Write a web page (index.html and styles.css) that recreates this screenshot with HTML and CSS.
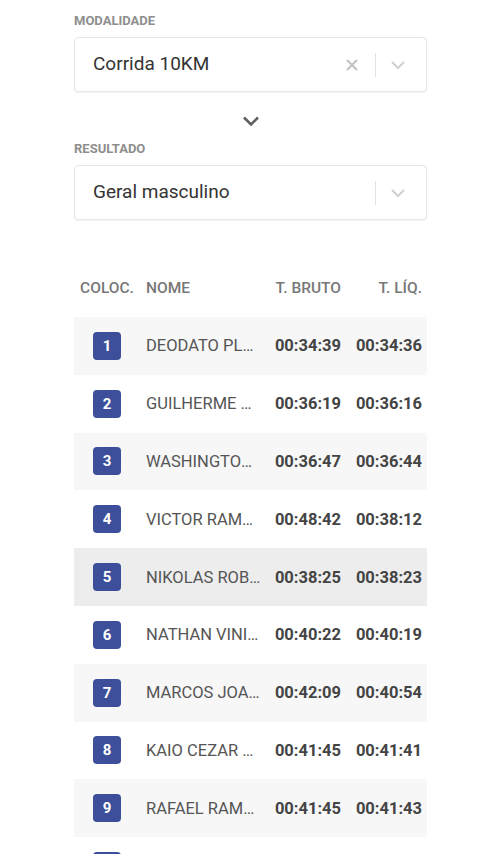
FILE: index.html
```html
<!DOCTYPE html>
<html lang="pt-BR">
<head>
  <meta charset="UTF-8" />
  <meta name="viewport" content="width=device-width, initial-scale=1.0"/>
  <title>Resultados</title>
  <link rel="stylesheet" href="styles.css">
</head>
<body>
  <div class="page">
    <label class="field-label">MODALIDADE</label>
    <div class="select">
      <span class="select-value">Corrida 10KM</span>
      <span class="select-icons">
        <svg class="clear" width="14" height="14" viewBox="0 0 14 14"><path d="M2 2L12 12M12 2L2 12" stroke="#c4c4c4" stroke-width="2.2" fill="none"/></svg>
        <span class="sep"></span>
        <svg class="arrow" width="16" height="10" viewBox="0 0 16 10"><path d="M2 2L8 8L14 2" stroke="#cfcfcf" stroke-width="2" fill="none"/></svg>
      </span>
    </div>

    <div class="mid-arrow">
      <svg width="18" height="12" viewBox="0 0 18 12"><path d="M2 2.5L9 9.5L16 2.5" stroke="#5f5f5f" stroke-width="2.6" fill="none"/></svg>
    </div>

    <label class="field-label">RESULTADO</label>
    <div class="select">
      <span class="select-value">Geral masculino</span>
      <span class="select-icons">
        <span class="sep"></span>
        <svg class="arrow" width="16" height="10" viewBox="0 0 16 10"><path d="M2 2L8 8L14 2" stroke="#cfcfcf" stroke-width="2" fill="none"/></svg>
      </span>
    </div>

    <div class="table-wrap">
      <table class="results">
        <colgroup>
          <col class="c-pos"><col class="c-name"><col class="c-time"><col class="c-time2">
        </colgroup>
        <thead>
          <tr>
            <th class="pos">COLOC.</th>
            <th class="name">NOME</th>
            <th class="time">T. BRUTO</th>
            <th class="time">T. LÍQ.</th>
          </tr>
        </thead>
        <tbody>
          <tr><td class="pos"><span class="badge">1</span></td><td class="name">DEODATO PLÁCIDO</td><td class="time">00:34:39</td><td class="time">00:34:36</td></tr>
          <tr><td class="pos"><span class="badge">2</span></td><td class="name">GUILHERME WANDERLEY</td><td class="time">00:36:19</td><td class="time">00:36:16</td></tr>
          <tr><td class="pos"><span class="badge">3</span></td><td class="name">WASHINGTON LUIZ</td><td class="time">00:36:47</td><td class="time">00:36:44</td></tr>
          <tr><td class="pos"><span class="badge">4</span></td><td class="name">VICTOR RAMOS</td><td class="time">00:48:42</td><td class="time">00:38:12</td></tr>
          <tr class="hover"><td class="pos"><span class="badge">5</span></td><td class="name">NIKOLAS ROBERTO</td><td class="time">00:38:25</td><td class="time">00:38:23</td></tr>
          <tr><td class="pos"><span class="badge">6</span></td><td class="name">NATHAN VINICIUS</td><td class="time">00:40:22</td><td class="time">00:40:19</td></tr>
          <tr><td class="pos"><span class="badge">7</span></td><td class="name">MARCOS JOAQUIM</td><td class="time">00:42:09</td><td class="time">00:40:54</td></tr>
          <tr><td class="pos"><span class="badge">8</span></td><td class="name">KAIO CEZAR SILVA</td><td class="time">00:41:45</td><td class="time">00:41:41</td></tr>
          <tr><td class="pos"><span class="badge">9</span></td><td class="name">RAFAEL RAMOS</td><td class="time">00:41:45</td><td class="time">00:41:43</td></tr>
          <tr><td class="pos"><span class="badge">10</span></td><td class="name">LUCAS FERREIRA</td><td class="time">00:42:01</td><td class="time">00:41:58</td></tr>
        </tbody>
      </table>
    </div>
  </div>
</body>
</html>
```

FILE: styles.css
```css
body {
  margin: 0;
  background: #ffffff;
  font-family: Roboto, "Liberation Sans", sans-serif;
  overflow: hidden;
}

.page {
  width: 353px;
  margin-left: 74px;
  padding-top: 13px;
}

.field-label {
  display: block;
  font-size: 13px;
  font-weight: bold;
  color: #8e8e8e;
  margin-bottom: 9px;
}

.select {
  height: 53px;
  border: 1px solid #e6e6e6;
  border-radius: 4px;
  box-shadow: 0 1px 2px rgba(0, 0, 0, 0.06);
  display: flex;
  align-items: center;
  padding: 0 20px 0 18px;
}

.select-value {
  flex: 1;
  font-size: 19px;
  color: #333;
  margin-top: -2px;
}

.select-icons {
  display: flex;
  align-items: center;
}

.clear {
  margin-right: 16px;
}

.sep {
  width: 1px;
  height: 24px;
  background: #e2e2e2;
  margin-right: 14px;
}

.mid-arrow {
  display: flex;
  justify-content: center;
  padding: 23px 0 14px;
}

.table-wrap {
  margin-top: 39px;
  overflow: hidden;
}

.results {
  width: 354px;
  table-layout: fixed;
  border-collapse: collapse;
}

.c-pos { width: 66px; }
.c-name { width: 128px; }
.c-time { width: 79px; }
.c-time2 { width: 81px; }

.results th {
  height: 58px;
  font-size: 15.5px;
  font-weight: 500;
  color: #777;
  text-align: left;
  padding: 0 0 0 6px;
}

.results th.pos,
.results td.pos {
  text-align: center;
  padding: 0;
}

.results th.time,
.results td.time {
  text-align: right;
  padding: 0 6px 0 0;
}

.results tbody tr {
  height: 57.8px;
}

.results tbody tr:nth-child(odd) {
  background: #f7f7f8;
}

.results tbody tr.hover {
  background: #ededee;
}

.results td {
  font-size: 16.5px;
  white-space: nowrap;
  overflow: hidden;
  padding: 0 0 0 6px;
}

.results td.name {
  color: #555;
  text-overflow: ellipsis;
  padding-right: 6px;
}

.results td.time {
  font-weight: bold;
  color: #444;
}

.badge {
  display: inline-block;
  width: 28px;
  height: 28px;
  line-height: 28px;
  border-radius: 4px;
  background: #3d4f9a;
  color: #fff;
  font-size: 15px;
  font-weight: bold;
  vertical-align: middle;
}
```
